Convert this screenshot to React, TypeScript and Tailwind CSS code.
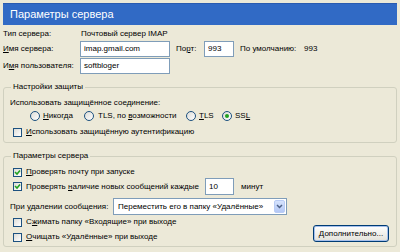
import React from "react";

const Check = ({ checked }: { checked?: boolean }) => (
  <span className="w-[9px] h-[9px] shrink-0 border border-[#1C5180] bg-gradient-to-br from-[#DCDCD7] to-white flex items-center justify-center">
    {checked && (
      <svg width="7" height="7" viewBox="0 0 7 7">
        <path d="M1 3 L3 5 L6 1.5" stroke="#21A121" strokeWidth="1.6" fill="none" />
      </svg>
    )}
  </span>
);

const Radio = ({ checked }: { checked?: boolean }) => (
  <span className="w-[10px] h-[10px] shrink-0 rounded-full border border-[#1C5180] bg-gradient-to-br from-[#DCDCD7] to-white flex items-center justify-center">
    {checked && <span className="w-[4px] h-[4px] rounded-full bg-[#21A121]" />}
  </span>
);

export default function App() {
  return (
    <div className="w-[400px] h-[252px] bg-[#ECE9D8] overflow-hidden text-black text-[8px] leading-[10px] font-['Liberation_Sans',Arial,sans-serif]">
      <div className="mx-[3px] mt-[3px] h-[22px] bg-[#316AC5] border-t border-[#2A5BB0] pl-[7px] flex items-center text-white text-[11px] leading-[13px]">
        Параметры сервера
      </div>

      <div className="pl-[3px] pt-[1px]">
        <div className="h-[15px] flex items-center">
          <span className="w-[78px]">Тип сервера:</span>
          <span>Почтовый сервер IMAP</span>
        </div>
        <div className="h-[16px] flex items-center">
          <span className="w-[77px]"><u>И</u>мя сервера:</span>
          <div className="w-[90px] h-[16px] border border-[#7F9DB9] bg-white pl-[3px] flex items-center">imap.gmail.com</div>
          <span className="ml-[6px] w-[28px]">По<u>р</u>т:</span>
          <div className="w-[30px] h-[16px] border border-[#7F9DB9] bg-white pl-[3px] flex items-center">993</div>
          <span className="ml-[6px] w-[64px]">По умолчанию:</span>
          <span>993</span>
        </div>
        <div className="h-[16px] mt-[1px] flex items-center">
          <span className="w-[77px]">И<u>м</u>я пользователя:</span>
          <div className="w-[90px] h-[16px] border border-[#7F9DB9] bg-white pl-[3px] flex items-center">softbloger</div>
        </div>
      </div>

      <fieldset className="mx-[3px] mt-[8px] border border-[#D0D0BF] rounded-[3px] pl-[6px] pb-[4px]">
        <legend className="ml-[1px] px-[2px]">Настройки защиты</legend>
        <div className="h-[12px] mt-[5px] flex items-center">Использовать защищённое соединение:</div>
        <div className="h-[12px] mt-[1px] flex items-center pl-[20px]">
          <div className="w-[54px] flex items-center gap-[3px]"><Radio /><span><u>Н</u>икогда</span></div>
          <div className="w-[102px] flex items-center gap-[4px]"><Radio /><span>TLS, по <u>в</u>озможности</span></div>
          <div className="w-[36px] flex items-center gap-[3px]"><Radio /><span><u>T</u>LS</span></div>
          <div className="flex items-center gap-[3px]"><Radio checked /><span>SS<u>L</u></span></div>
        </div>
        <div className="h-[12px] mt-[4px] ml-[3px] flex items-center gap-[4px]">
          <Check />
          <span><u>И</u>спользовать защищённую аутентификацию</span>
        </div>
      </fieldset>

      <fieldset className="mx-[3px] mt-[8px] border border-[#D0D0BF] rounded-[3px] pl-[6px] pr-[7px] pb-[3px]">
        <legend className="ml-[1px] px-[2px]">Параметры сервера</legend>
        <div className="h-[12px] mt-[5px] ml-[3px] flex items-center gap-[4px]">
          <Check checked />
          <span><u>П</u>роверять почту при запуске</span>
        </div>
        <div className="h-[17px] ml-[3px] flex items-center">
          <Check checked />
          <span className="ml-[4px] w-[179px]">Проверять <u>н</u>аличие новых сообщений каждые</span>
          <div className="w-[29px] h-[17px] border border-[#7F9DB9] bg-white pl-[3px] flex items-center">10</div>
          <span className="ml-[7px]">минут</span>
        </div>
        <div className="h-[17px] mt-[3px] flex items-center">
          <span className="w-[103px]">При <u>у</u>далении сообщения:</span>
          <div className="w-[174px] h-[17px] border border-[#7F9DB9] bg-white pl-[4px] flex items-center justify-between">
            <span>Переместить его в папку «Удалённые»</span>
            <span className="w-[11px] h-[13px] mr-[1px] rounded-[2px] bg-gradient-to-b from-[#D6E3FD] to-[#B4C8F5] border border-[#B9CCF5] flex items-center justify-center">
              <svg width="7" height="5" viewBox="0 0 7 5">
                <path d="M1 1 L3.5 3.5 L6 1" stroke="#4D6185" strokeWidth="1.5" fill="none" />
              </svg>
            </span>
          </div>
        </div>
        <div className="flex justify-between">
          <div>
            <div className="h-[12px] mt-[1px] ml-[3px] flex items-center gap-[4px]">
              <Check />
              <span>С<u>ж</u>имать папку «Входящие» при выходе</span>
            </div>
            <div className="h-[12px] mt-[3px] ml-[3px] flex items-center gap-[4px]">
              <Check />
              <span><u>О</u>чищать «Удалённые» при выходе</span>
            </div>
          </div>
          <button className="self-end mb-[1px] w-[76px] h-[17px] rounded-[3px] border border-[#003C74] bg-gradient-to-b from-white to-[#E3E2DA] shadow-[inset_0_0_0_1px_#A6C0EC] flex items-center justify-center text-[8px]">
            <span><u>Д</u>ополнительно...</span>
          </button>
        </div>
      </fieldset>
    </div>
  );
}
